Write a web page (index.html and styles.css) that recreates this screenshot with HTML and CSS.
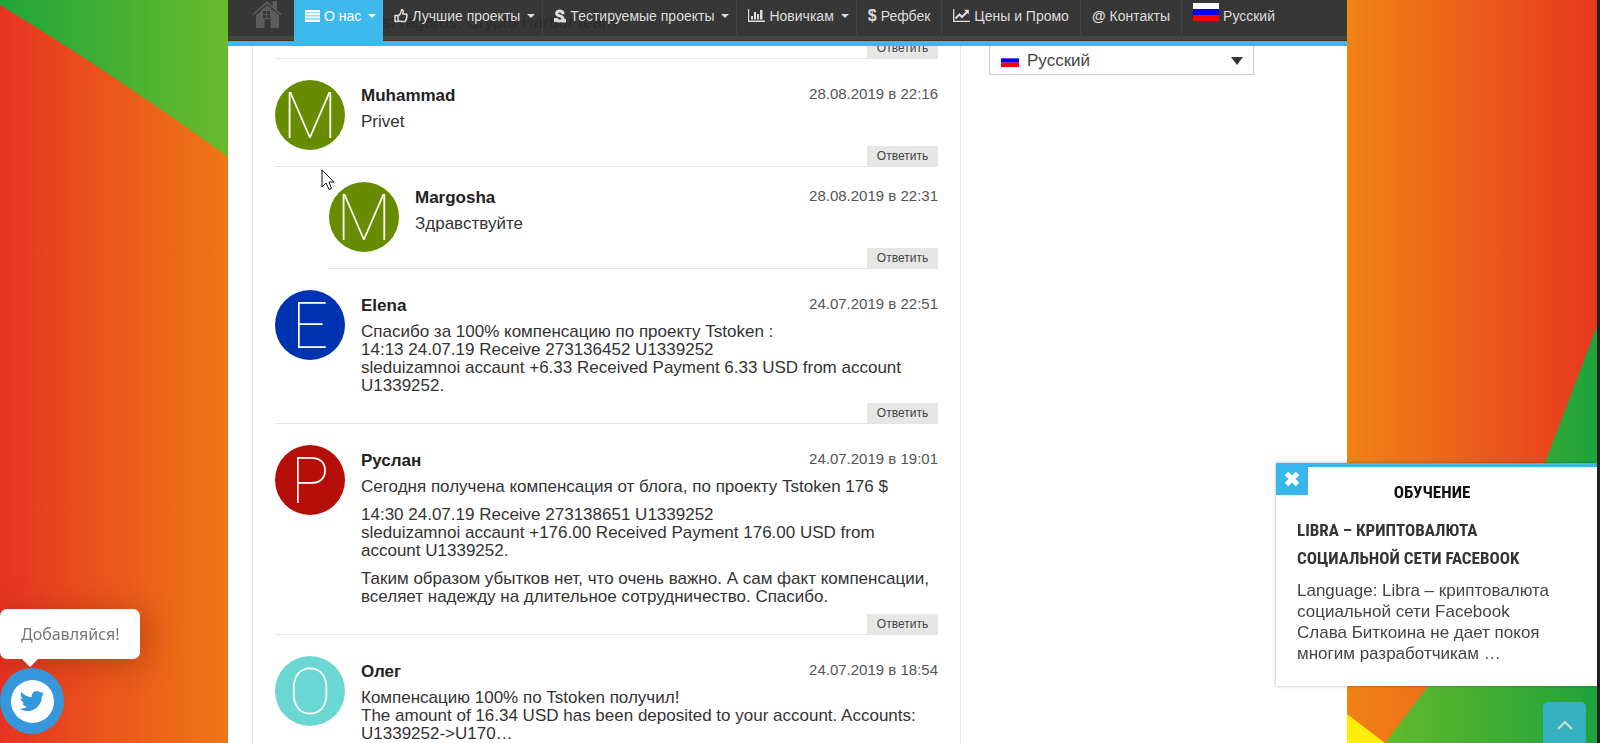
FILE: index.html
```html
<!DOCTYPE html>
<html lang="ru">
<head>
<meta charset="utf-8">
<title>Отзывы</title>
<link rel="stylesheet" href="styles.css">
</head>
<body>
<svg class="defs" width="0" height="0" aria-hidden="true">
  <symbol id="flag" viewBox="0 0 18 12" preserveAspectRatio="none"><path fill="#fff" d="M0 0h18v4H0z"/><path fill="#00f" d="M0 4h18v4H0z"/><path fill="#f00" d="M0 8h18v4H0z"/></symbol>
</svg>
<div class="layout">
  <svg class="art" viewBox="0 0 228 743" preserveAspectRatio="none" aria-hidden="true">
    <defs>
      <linearGradient id="l1"><stop offset="0" stop-color="#e63322"/><stop offset=".5" stop-color="#ea581b"/><stop offset="1" stop-color="#ef7616"/></linearGradient>
      <linearGradient id="l2"><stop offset="0" stop-color="#1fa53a"/><stop offset="1" stop-color="#69ba2c"/></linearGradient>
    </defs>
    <path fill="url(#l1)" d="M0 0h228v743H0z"/>
    <path fill="url(#l2)" d="M0 0h228v157Q112 73 0 5z"/>
  </svg>

  <header class="topbar">
    <nav class="menu">
      <a class="home" href="#" aria-label="Главная"><svg width="30" height="28" viewBox="0 0 30 28"><path fill="#5c5c5c" d="M15 1l5.500 5V1H25v9l5 4.500-1 1-14-12-14 12-1-1z"/><path fill="#5c5c5c" fill-rule="evenodd" d="M15 5l12 10v13h-8.500v-9h-6v9H4V15zM11 11h3v3h-3zm4 0h3v3h-3zm-4 4h3v3h-3zm4 0h3v3h-3z"/></svg></a>
      <a class="item active" href="#"><svg width="15" height="12" viewBox="0 0 15 12"><path fill="#fff" d="M0 0h15v2.400H0zm0 3h15v2.400H0zm0 3.200h15v2.400H0zm0 3.300h15V12H0z"/></svg>О нас<i class="caret"></i></a>
      <a class="item" href="#"><svg width="14" height="14" viewBox="0 0 14 14" fill="none" stroke="#ddd" stroke-width="1.500" stroke-linejoin="round"><path d="M1 6.500h3v6H1zM4 7c1.500-.8 2-2 2.700-2.900C7.300 3.200 7 1 7.600.8c1.500-.3 2 1.200 1.200 4.200h3.300c1.300 0 1.300 1.700.4 2 .7.500.5 1.600-.2 1.900.5.700.2 1.500-.5 1.700.2 1.200-.4 2-1.500 2H8.500c-1.700 0-2.500-.8-4.500-.8"/></svg>Лучшие проекты<i class="caret"></i></a>
      <a class="item" href="#"><svg width="12" height="14" viewBox="0 0 12 14" fill="none" stroke="#ddd"><path stroke-width="3" d="M9 5.200C9.200 1.200 2.600 1.200 2.600 4.400c0 2.900 6.400 2.200 6.400 5.100 0 3.400-6.800 3.400-6.800-.6"/><path fill="#ddd" stroke="none" d="M9 10h3v3.500H8zM0 9h3v4H0z"/></svg>Тестируемые проекты<i class="caret"></i></a>
      <a class="item" href="#"><svg width="17" height="13" viewBox="0 0 17 13" fill="#ddd"><path d="M0 0h1.200v11.500H17V13H0zM3 7h2v3.500H3zm3-4h2v7.500H6zm3 2h2v5.500H9zm3-4h2.500v9.500H12z"/></svg>Новичкам<i class="caret"></i></a>
      <a class="item plain" href="#"><b class="sign">$</b>Рефбек</a>
      <a class="item plain" href="#"><svg width="17" height="13" viewBox="0 0 17 13" fill="none" stroke="#ddd"><path stroke-width="1.300" d="M.7 0v12.300H17"/><path stroke-width="2" d="M2.500 9.500l4-4 2.500 2.500L14 3"/><path fill="#ddd" stroke="none" d="M11 .8h4.800v4.800z"/></svg>Цены и Промо</a>
      <a class="item plain" href="#"><b>@</b>Контакты</a>
      <a class="item lang" href="#"><svg class="bigflag" width="26" height="18"><use href="#flag"/></svg>Русский</a>
    </nav>
  </header>

  <div class="content">
    <main class="thread">
      <article class="comment first">
        <div class="body"><p>Best regards, Crypto Harbor team</p><button class="reply" type="button">Ответить</button></div>
      </article>
      <article class="comment">
        <div class="avatar olive">M</div>
        <div class="body">
          <div class="head"><b>Muhammad</b><time>28.08.2019 в 22:16</time></div>
          <p>Privet</p>
          <button class="reply" type="button">Ответить</button>
        </div>
      </article>
      <article class="comment nested">
        <div class="avatar olive">M</div>
        <div class="body">
          <div class="head"><b>Margosha</b><time>28.08.2019 в 22:31</time></div>
          <p>Здравствуйте</p>
          <button class="reply" type="button">Ответить</button>
        </div>
      </article>
      <article class="comment">
        <div class="avatar blue">E</div>
        <div class="body">
          <div class="head"><b>Elena</b><time>24.07.2019 в 22:51</time></div>
          <p>Спасибо за 100% компенсацию по проекту Tstoken :<br>14:13 24.07.19 Receive 273136452 U1339252<br>sleduizamnoi accaunt +6.33 Received Payment 6.33 USD from account U1339252.</p>
          <button class="reply" type="button">Ответить</button>
        </div>
      </article>
      <article class="comment">
        <div class="avatar red">P</div>
        <div class="body">
          <div class="head"><b>Руслан</b><time>24.07.2019 в 19:01</time></div>
          <p>Сегодня получена компенсация от блога, по проекту Tstoken 176 $</p>
          <p>14:30 24.07.19 Receive 273138651 U1339252<br>sleduizamnoi accaunt +176.00 Received Payment 176.00 USD from account U1339252.</p>
          <p>Таким образом убытков нет, что очень важно. А сам факт компенсации, вселяет надежду на длительное сотрудничество. Спасибо.</p>
          <button class="reply" type="button">Ответить</button>
        </div>
      </article>
      <article class="comment">
        <div class="avatar aqua">O</div>
        <div class="body">
          <div class="head"><b>Олег</b><time>24.07.2019 в 18:54</time></div>
          <p>Компенсацию 100% по Tstoken получил!<br>The amount of 16.34 USD has been deposited to your account. Accounts: U1339252-&gt;U170…</p>
        </div>
      </article>
    </main>
    <aside class="side">
      <div class="picker">
        <select aria-label="Язык"><option>Русский</option></select>
        <svg class="smallflag" width="18" height="13" aria-hidden="true"><use href="#flag"/></svg>
        <i class="arrow"></i>
      </div>
    </aside>
  </div>

  <svg class="art right" viewBox="0 0 250 743" preserveAspectRatio="none" aria-hidden="true">
    <defs>
      <linearGradient id="r1"><stop offset="0" stop-color="#f18313"/><stop offset=".45" stop-color="#ec6119"/><stop offset="1" stop-color="#e73820"/></linearGradient>
      <linearGradient id="r2" gradientUnits="userSpaceOnUse" x1="40" x2="250" y1="0" y2="0"><stop offset="0" stop-color="#62b82b"/><stop offset="1" stop-color="#1fa33b"/></linearGradient>
      <linearGradient id="r3"><stop offset="0" stop-color="#f18313"/><stop offset="1" stop-color="#ee6b1b"/></linearGradient>
    </defs>
    <path fill="url(#r1)" d="M0 0h250v743H0z"/>
    <path fill="url(#r3)" d="M0 670h100v73H0z"/>
    <path fill="url(#r2)" d="M250 326v417H38l43-57 117-223z"/>
    <path fill="#ffec08" d="M0 714l38 29H0z"/>
  </svg>
  <div class="edge"></div>
</div>

<svg class="pointer" width="14" height="22" viewBox="0 0 14 22" aria-hidden="true"><path fill="#fff" stroke="#111" d="M1 1v17l4-4 3 6.500 2.500-1.200L8 13h5z"/></svg>

<div class="bubble">Добавляйся!</div>
<a class="tweet" href="#" aria-label="Twitter"><span><svg width="28" height="28" viewBox="0 0 1792 1792"><path fill="#3498db" d="M1684 408q-67 98-162 167 1 14 1 42 0 130-38 259.500t-115.500 248.500-184.500 210.500-258 146-323 54.500q-271 0-496-145 35 4 78 4 225 0 401-138-105-2-188-64.500t-114-159.500q33 5 61 5 43 0 85-11-112-23-185.500-111.500t-73.500-205.500v-4q68 38 146 41-66-44-105-115t-39-154q0-88 44-163 121 149 294.500 238.500t371.500 99.500q-8-38-8-74 0-134 94.500-228.500t228.500-94.500q140 0 236 102 109-21 205-78-37 115-142 178 93-10 186-50z"/></svg></span></a>

<section class="promo">
  <button class="close" type="button" aria-label="Закрыть"><svg width="16" height="16" viewBox="0 0 16 16"><path stroke="#fff" stroke-width="5" d="M2.500 2.500l11 11m0-11l-11 11"/></svg></button>
  <h2>ОБУЧЕНИЕ</h2>
  <h3>LIBRA – КРИПТОВАЛЮТА СОЦИАЛЬНОЙ СЕТИ FACEBOOK</h3>
  <p>Language: Libra – криптовалюта социальной сети Facebook<br>Слава Биткоина не дает покоя многим разработчикам …</p>
</section>
<a class="totop" href="#" aria-label="Наверх"><svg width="16" height="10" viewBox="0 0 16 10"><path fill="none" stroke="#c5dfc4" stroke-width="2.200" d="M1 9l7-7 7 7"/></svg></a>
</body>
</html>
```
FILE: styles.css
```css
* { box-sizing: border-box; }
body { margin: 0; font-family: "Liberation Sans", Arial, sans-serif; font-size: 17px; line-height: 18px; color: #333; overflow: hidden; }
p, h2, h3 { margin: 0; }
a { color: inherit; text-decoration: none; }
button, select { font: inherit; color: inherit; }
svg { display: block; flex: none; }
.defs { position: absolute; }

.layout { display: grid; grid-template-columns: 228fr 1119fr 250fr 3px; grid-template-rows: 100vh; }
.art { width: 100%; height: 100%; grid-column: 1; grid-row: 1; }
.art.right { grid-column: 3; }
.edge { grid-column: 4; grid-row: 1; background: #222; }

.topbar { grid-column: 2; grid-row: 1; align-self: start; z-index: 1; background: rgba(44, 44, 44, .95); border-bottom: 5px solid #3cb9ea; }
.menu { display: flex; height: 41px; font-size: 14px; color: #ddd; box-shadow: inset 0 -1px #4a2f10, inset 0 -5px #444; }
.home { width: 66px; padding-left: 24px; }
.item { display: flex; gap: 4px; padding: 0 7px 10px 11px; align-items: center; border-right: 1px solid #424242; white-space: nowrap; }
.item.plain { padding-right: 11px; }
.item.active { background: #3eb9eb; color: #fff; border-right: 0; padding-right: 7px; }
.item.lang { border-right: 0; }
.bigflag { margin-bottom: 8px; }
.sign { font-size: 16px; }
.caret { border: 4px solid transparent; border-top-color: currentColor; border-bottom: 0; margin-left: 3px; }

.content { grid-column: 2; grid-row: 1; display: grid; grid-template-columns: 709fr 265fr; gap: 28px; padding: 0 93px 0 24px; background: #fff; overflow: hidden; }
.thread { padding: 0 22px; border: 1px solid #e8e8e8; border-width: 0 1px; }
.comment { display: grid; grid-template-columns: 70px 1fr; gap: 16px; padding-top: 21px; border-bottom: 1px solid #e5e5e5; }
.comment.nested { margin-left: 54px; padding-top: 15px; }
.comment.first { padding-top: 7px; }
.comment.first .body { grid-column: 2; min-height: 0; }
.avatar { width: 70px; height: 70px; border-radius: 50%; color: #fff; font: 100 64px/74px Roboto, Inter, sans-serif; text-align: center; }
.olive { background: #688c00; }
.blue { background: #0033b0; }
.red { background: #b50e08; }
.aqua { background: #6ad7d3; }
.body { display: flex; flex-direction: column; padding-top: 7px; min-height: 86px; }
.head { display: flex; justify-content: space-between; margin-bottom: 8px; }
.head b { color: #222; }
.head time { font-size: 15px; line-height: 14px; color: #555; }
.body p + p { margin-top: 10px; }
.reply { align-self: flex-end; margin-top: 8px; width: 71px; height: 20px; padding: 0; border: 0; background: #e6e6e5; font-size: 12px; color: #444; }
.head + p:nth-last-child(2) + .reply { margin-top: auto; }
.head + p:nth-last-child(2) { padding-bottom: 8px; }
.comment.first .reply { margin-top: 6px; }

.picker { position: relative; margin-top: 42px; }
.picker select { display: block; width: 100%; height: 33px; padding: 4px 0 0 37px; appearance: none; background: #fff; border: 1px solid #ccc; font-size: 17px; color: #444; }
.smallflag { position: absolute; left: 12px; top: 12px; }
.arrow { position: absolute; right: 11px; top: 15px; border: 6px solid transparent; border-top: 8px solid #333; border-bottom: 0; }

.pointer { position: absolute; left: 321px; top: 169px; }

.bubble { position: fixed; left: 0; bottom: 84px; padding: 16px 21px; border-radius: 7px; background: #fff; color: #777; font-family: "Noto Sans", "Open Sans", sans-serif; font-size: 16px; box-shadow: 4px 4px 30px rgba(120, 30, 0, .4); }
.bubble::after { content: ""; position: absolute; left: 22px; top: 100%; border: 8px solid transparent; border-top: 8px solid #fff; border-bottom: 0; }
.tweet { position: fixed; left: 0; bottom: 9px; display: grid; place-items: center; width: 64px; height: 66px; border-radius: 50%; background: #3498db; }
.tweet span { display: grid; place-items: center; width: 43px; height: 43px; border-radius: 50%; background: #fff; }

.promo { position: fixed; z-index: 2; right: 3px; bottom: 57px; width: 321px; padding: 11px 30px 22px 21px; border-top: 4px solid #36b6ea; background: #fff; box-shadow: 0 0 3px rgba(0, 0, 0, .3); }
.promo h2, .promo h3 { font-family: "Liberation Sans Narrow", "Roboto Condensed", "Open Sans Condensed", sans-serif; font-weight: 700; }
.promo h2 { font-size: 17px; line-height: 28px; text-align: center; color: #111; }
.promo h3 { margin: 10px 0 8px; font-size: 17px; line-height: 28px; color: #333; }
.promo p { font-size: 17px; line-height: 21px; color: #444; }
.close { position: absolute; left: 0; top: -4px; display: grid; place-items: center; width: 32px; height: 32px; padding: 0; border: 0; background: #36b6ea; }
.totop { position: fixed; right: 14px; bottom: -4px; display: grid; place-items: center; width: 43px; height: 45px; border-radius: 5px; background: rgba(56, 178, 210, .9); }
```
